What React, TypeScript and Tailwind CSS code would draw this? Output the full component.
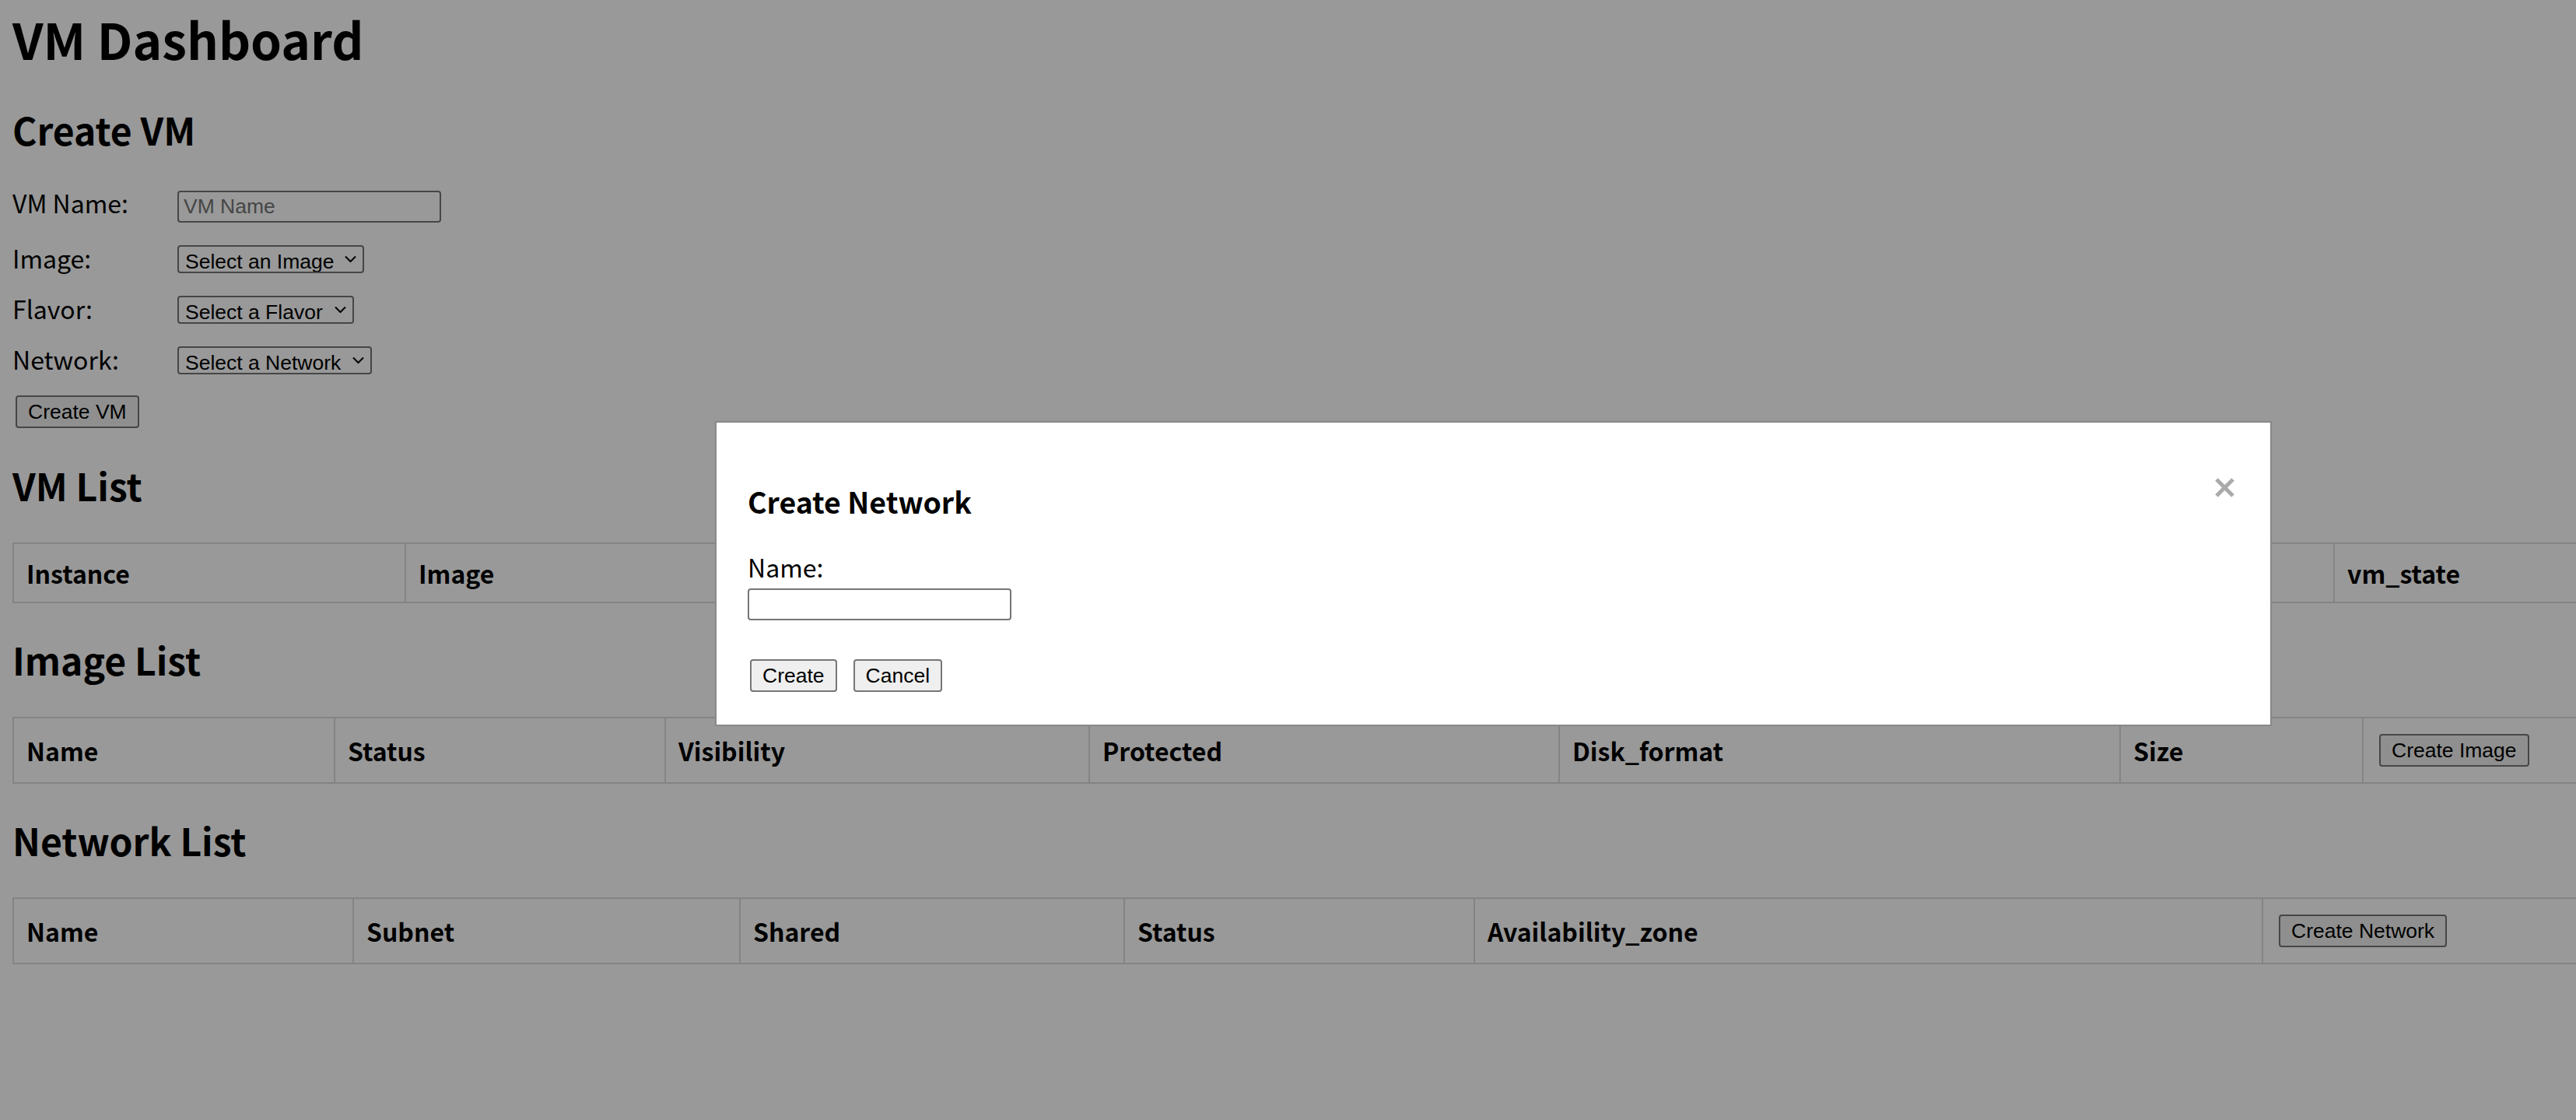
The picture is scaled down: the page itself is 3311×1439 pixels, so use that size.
import React from 'react'

const sans = "font-['Noto_Sans_CJK_KR',sans-serif]"
const ctrl = "font-['Liberation_Sans',Arial,sans-serif] text-[26.5px] text-black"

function Chevron() {
  return (
    <svg viewBox="0 0 15 9" className="pointer-events-none absolute right-[10px] top-1/2 h-[9px] w-[15px] -translate-y-1/2" fill="none">
      <path d="M1 1l6.5 6.5L14 1" stroke="currentColor" strokeWidth="2" />
    </svg>
  )
}

function Select({ label, width }: { label: string; width: string }) {
  return (
    <span className="relative inline-flex text-black">
      <select
        className={`${ctrl} ${width} h-[36px] appearance-none rounded-[4px] border-2 border-[#767676] bg-white pl-[8px]`}
        defaultValue=""
      >
        <option value="">{label}</option>
      </select>
      <Chevron />
    </span>
  )
}

function Btn({ children, className = '' }: { children: React.ReactNode; className?: string }) {
  return (
    <button className={`${ctrl} h-[42px] rounded-[4px] border-2 border-[#767676] bg-[#efefef] px-[14px] ${className}`}>
      {children}
    </button>
  )
}

function Row({ label, children, className }: { label: string; children: React.ReactNode; className: string }) {
  return (
    <div className={`flex items-baseline ${className}`}>
      <label className="w-[212px] shrink-0 text-[32px] leading-[24px]">{label}</label>
      {children}
    </div>
  )
}

function Table({ cols, heads, rowH }: { cols: string[]; heads: React.ReactNode[]; rowH: string }) {
  return (
    <table className="w-[3807px] table-fixed border-collapse">
      <colgroup>
        {cols.map((c, i) => (
          <col key={i} className={c} />
        ))}
      </colgroup>
      <thead>
        <tr>
          {heads.map((h, i) => (
            <th key={i} className="border-2 border-[#dddddd] p-[16px] text-left text-[32px] font-bold">
              <div className={`flex items-center ${rowH}`}>{h}</div>
            </th>
          ))}
        </tr>
      </thead>
    </table>
  )
}

export default function App() {
  return (
    <div className={`relative min-h-screen overflow-hidden bg-white px-[16px] text-black ${sans}`}>
      <h1 className="mt-[1px] text-[64px] font-bold leading-[96px]">VM Dashboard</h1>
      <h2 className="mt-[39px] text-[48px] font-bold leading-[60px]">Create VM</h2>

      <Row label="VM Name:" className="mt-[49px]">
        <input
          placeholder="VM Name"
          className={`${ctrl} h-[41px] w-[339px] rounded-[4px] border-2 border-[#767676] bg-white pl-[6px] placeholder:text-[#757575]`}
        />
      </Row>
      <Row label="Image:" className="mt-[29px]">
        <Select label="Select an Image" width="w-[240px]" />
      </Row>
      <Row label="Flavor:" className="mt-[29px]">
        <Select label="Select a Flavor" width="w-[227px]" />
      </Row>
      <Row label="Network:" className="mt-[29px]">
        <Select label="Select a Network" width="w-[250px]" />
      </Row>
      <div className="mt-[27px]">
        <Btn className="ml-[4px]">Create VM</Btn>
      </div>

      <h2 className="mt-[43px] text-[48px] font-bold leading-[60px]">VM List</h2>
      <div className="mt-[44px]">
        <Table
          rowH="h-[42px]"
          cols={['w-[504px]', 'w-[480px]', 'w-[450px]', 'w-[450px]', 'w-[500px]', 'w-[599px]', 'w-[824px]']}
          heads={['Instance', 'Image', 'Flavor', 'Network', 'Status', 'power_state', 'vm_state']}
        />
      </div>

      <h2 className="mt-[42px] text-[48px] font-bold leading-[60px]">Image List</h2>
      <div className="mt-[44px]">
        <Table
          rowH="h-[50px]"
          cols={['w-[413px]', 'w-[425px]', 'w-[545px]', 'w-[604px]', 'w-[721px]', 'w-[312px]', 'w-[787px]']}
          heads={[
            'Name',
            'Status',
            'Visibility',
            'Protected',
            'Disk_format',
            'Size',
            <Btn key="b" className="ml-[4px] font-normal">Create Image</Btn>,
          ]}
        />
      </div>

      <h2 className="mt-[42px] text-[48px] font-bold leading-[60px]">Network List</h2>
      <div className="mt-[44px]">
        <Table
          rowH="h-[50px]"
          cols={['w-[437px]', 'w-[497px]', 'w-[494px]', 'w-[450px]', 'w-[1013px]', 'w-[916px]']}
          heads={[
            'Name',
            'Subnet',
            'Shared',
            'Status',
            'Availability_zone',
            <Btn key="b" className="ml-[4px] font-normal">Create Network</Btn>,
          ]}
        />
      </div>

      <div className="fixed inset-0 bg-black/40">
        <div className="absolute left-[919px] top-[541px] w-[2001px] border-2 border-[#888888] bg-white px-[40px] pb-[42px] pt-[40px]">
          <div className="flex items-start justify-between">
            <h3 className="mt-[36px] text-[37.44px] font-bold leading-[50px]">Create Network</h3>
            <svg viewBox="0 0 27 27" className="mr-[5px] mt-[30px] h-[27px] w-[27px] text-[#aaaaaa]" fill="none">
              <path d="M3 3l21 21M24 3L3 24" stroke="currentColor" strokeWidth="5" />
            </svg>
          </div>
          <label className="mt-[39px] block text-[32px] leading-[40px]">Name:</label>
          <input className={`${ctrl} mt-[8px] block h-[41px] w-[339px] rounded-[4px] border-2 border-[#767676] bg-white pl-[6px]`} />
          <div className="mt-[50px] flex">
            <Btn className="ml-[3px]">Create</Btn>
            <Btn className="ml-[21px]">Cancel</Btn>
          </div>
        </div>
      </div>
    </div>
  )
}
